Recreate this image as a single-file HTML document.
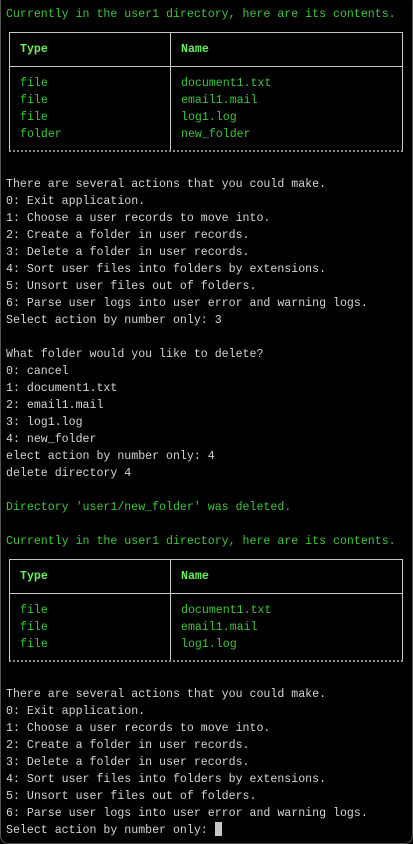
<!DOCTYPE html>
<html><head><style>
body{margin:0;background:#000;width:413px;height:844px;overflow:hidden;position:relative;font-family:"Liberation Mono",monospace;font-size:11.6px;}
.frame{position:absolute;left:0;top:-6px;width:411px;height:848px;border:1px solid #555;border-radius:8px;}
.l{position:absolute;left:6px;white-space:pre;line-height:17px;color:#d4d4d4;}
.g{color:#3ec43e;}
.t{position:absolute;left:9px;width:392px;border:1px solid #c8c8c8;border-bottom:2px dotted #8a8a8a;}
.t .h{position:absolute;left:0;right:0;top:0;height:33px;border-bottom:1px solid #c8c8c8;}
.t .v{position:absolute;left:160px;top:0;bottom:0;border-left:1px solid #c8c8c8;}
.t span{position:absolute;white-space:pre;line-height:17px;color:#3ec43e;}
.t .hd{color:#6dec5f;font-weight:bold;}
.cur{display:inline-block;width:7px;height:14px;background:#c8c8c8;vertical-align:-3px;}
</style></head><body>
<div class="frame"></div>
<div class="l g" style="top:6px">Currently in the user1 directory, here are its contents.</div>
<div class="t" style="top:32px;height:117px">
<div class="h"></div><div class="v"></div>
<span class="hd" style="left:10px;top:8px">Type</span><span class="hd" style="left:171px;top:8px">Name</span>
<span style="left:10px;top:42px">file
file
file
folder</span>
<span style="left:171px;top:42px">document1.txt
email1.mail
log1.log
new_folder</span>
</div>
<div class="l" style="top:176px">There are several actions that you could make.
0: Exit application.
1: Choose a user records to move into.
2: Create a folder in user records.
3: Delete a folder in user records.
4: Sort user files into folders by extensions.
5: Unsort user files out of folders.
6: Parse user logs into user error and warning logs.
Select action by number only: 3

What folder would you like to delete?
0: cancel
1: document1.txt
2: email1.mail
3: log1.log
4: new_folder
elect action by number only: 4
delete directory 4</div>
<div class="l g" style="top:499px">Directory 'user1/new_folder' was deleted.</div>
<div class="l g" style="top:533px">Currently in the user1 directory, here are its contents.</div>
<div class="t" style="top:559px;height:100px">
<div class="h"></div><div class="v"></div>
<span class="hd" style="left:10px;top:8px">Type</span><span class="hd" style="left:171px;top:8px">Name</span>
<span style="left:10px;top:42px">file
file
file</span>
<span style="left:171px;top:42px">document1.txt
email1.mail
log1.log</span>
</div>
<div class="l" style="top:686px">There are several actions that you could make.
0: Exit application.
1: Choose a user records to move into.
2: Create a folder in user records.
3: Delete a folder in user records.
4: Sort user files into folders by extensions.
5: Unsort user files out of folders.
6: Parse user logs into user error and warning logs.
Select action by number only: <span class="cur"></span></div>
</body></html>
